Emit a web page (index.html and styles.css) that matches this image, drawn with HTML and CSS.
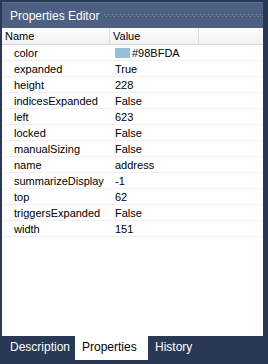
FILE: index.html
```html
<!DOCTYPE html>
<html lang="en">
<head>
    <meta charset="UTF-8">
    <title>Properties Editor</title>
    <link rel="stylesheet" href="styles.css">
</head>
<body>
    <div class="window">
        <div class="panel">
            <div class="title-bar">
                <span class="title">Properties Editor</span>
                <div class="grip"></div>
            </div>
            <div class="grid">
                <div class="header">
                    <div class="col-name">Name</div>
                    <div class="col-value">Value</div>
                    <div class="col-rest"></div>
                </div>
                <div class="row"><div class="col-name">color</div><div class="col-value"><span class="swatch"></span>#98BFDA</div></div>
                <div class="row"><div class="col-name">expanded</div><div class="col-value">True</div></div>
                <div class="row"><div class="col-name">height</div><div class="col-value">228</div></div>
                <div class="row"><div class="col-name">indicesExpanded</div><div class="col-value">False</div></div>
                <div class="row"><div class="col-name">left</div><div class="col-value">623</div></div>
                <div class="row"><div class="col-name">locked</div><div class="col-value">False</div></div>
                <div class="row"><div class="col-name">manualSizing</div><div class="col-value">False</div></div>
                <div class="row"><div class="col-name">name</div><div class="col-value">address</div></div>
                <div class="row"><div class="col-name">summarizeDisplay</div><div class="col-value">-1</div></div>
                <div class="row"><div class="col-name">top</div><div class="col-value">62</div></div>
                <div class="row"><div class="col-name">triggersExpanded</div><div class="col-value">False</div></div>
                <div class="row"><div class="col-name">width</div><div class="col-value">151</div></div>
            </div>
        </div>
        <div class="tabs">
            <div class="tab">Description</div>
            <div class="tab active">Properties</div>
            <div class="tab">History</div>
        </div>
    </div>
</body>
</html>
```

FILE: styles.css
```css
body {
    margin: 0;
    background: #293955;
    font-family: Tahoma, "Liberation Sans", Arial, sans-serif;
    font-size: 11px;
    color: #000;
}
.window {
    width: 268px;
    height: 364px;
    display: flex;
    flex-direction: column;
    padding: 2px 5px 0 2px;
    box-sizing: border-box;
}
.panel {
    flex: 1;
    display: flex;
    flex-direction: column;
    background: #fff;
}
.title-bar {
    height: 26px;
    display: flex;
    align-items: center;
    background: #4d6082;
    border-top: 1px solid #5a6d8f;
    box-sizing: border-box;
    padding-left: 8px;
}
.title {
    color: #fff;
    font-size: 12px;
}
.grip {
    flex: 1;
    height: 3px;
    margin-left: 5px;
    background-image:
        linear-gradient(90deg, #8393b0 1px, transparent 1px),
        linear-gradient(90deg, #8393b0 1px, transparent 1px);
    background-size: 4px 1px, 4px 1px;
    background-position: 0 0, 2px 2px;
    background-repeat: repeat-x;
}
.grid {
    flex: 1;
}
.header {
    display: flex;
    height: 16px;
    background: linear-gradient(#ffffff, #eef0f2);
    border-bottom: 1px solid #d5d5d5;
}
.header > div {
    border-right: 1px solid #dcdcdc;
    padding-left: 3px;
    line-height: 17px;
    box-sizing: border-box;
}
.header .col-rest {
    flex: 1;
    border-right: none;
}
.col-name {
    padding-left: 12px;
    box-sizing: border-box;
}
.header .col-name {
    width: 108px;
}
.col-value {
    width: 89px;
    display: flex;
    align-items: center;
}
.row {
    display: flex;
    height: 16px;
    padding-top: 1px;
    line-height: 15px;
    border-bottom: 1px solid #f0f0f0;
    box-sizing: border-box;
}
.row .col-name {
    width: 113px;
}
.swatch {
    width: 15px;
    height: 10px;
    background: #98bfda;
    margin-right: 2px;
}
.tabs {
    height: 28px;
    display: flex;
    align-items: flex-start;
}
.tab {
    height: 24px;
    line-height: 22px;
    color: #fff;
    font-size: 12px;
    padding: 0 7px;
}
.tab.active {
    background: #fff;
    color: #000;
    width: 73px;
    box-sizing: border-box;
}
.tab:first-child {
    width: 73px;
    box-sizing: border-box;
    padding-left: 8px;
}
```
